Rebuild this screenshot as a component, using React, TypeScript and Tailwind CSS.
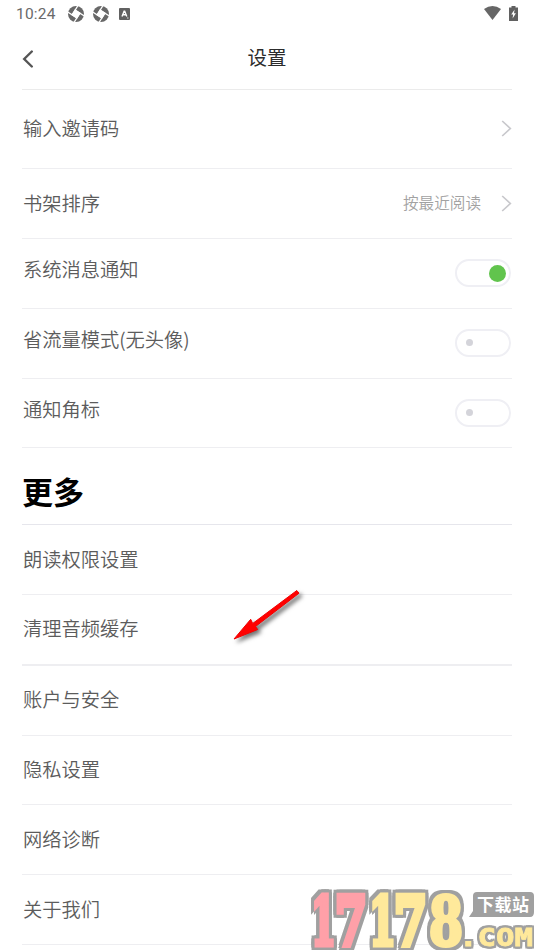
import { useState } from "react";
import clsx from "clsx";

function ShutterIcon() {
  return (
    <svg width="16" height="16" viewBox="0 0 16 16">
      <circle cx="8" cy="8" r="8" fill="#686868" />
      <g transform="rotate(32 8 8)" fill="#fff" stroke="#fff" strokeWidth="1.300">
        <rect x="5.200" y="5.200" width="5.600" height="5.600" />
        <path d="M5 5.200H16M10.800 5V16M11 10.800H0M5.200 11V0" />
      </g>
    </svg>
  );
}

function StatusBar() {
  return (
    <div className="h-7 flex items-center pl-4 pr-4">
      <span className="w-[52px] font-[Roboto] text-[15.5px] leading-7 tracking-[0.2px] text-[#6a6a6a]">10:24</span>
      <div className="flex items-center gap-[9px] -mt-px">
        <ShutterIcon />
        <ShutterIcon />
        <svg className="ml-px" width="11" height="12" viewBox="0 0 11 12">
          <rect width="11" height="12" rx="1" fill="#616161" />
          <path d="M3 8.500L5.100 3.200H5.700L7.800 8.500M3.800 6.800H7" fill="none" stroke="#fff" strokeWidth="1.400" />
          <path d="M8 10H9.500" stroke="#ddd" />
        </svg>
      </div>
      <div className="ml-auto flex items-center gap-2 -mt-0.5">
        <svg width="17" height="14" viewBox="0 0 17 14">
          <path d="M0 3Q8.500 -2.800 17 3L8.500 14Z" fill="#666" />
        </svg>
        <svg width="9" height="15" viewBox="0 0 9 15">
          <path d="M2.500 0H6.500V1.500H9V15H0V1.500H2.500Z" fill="#616161" />
          <path d="M5.600 3.500L2.200 8.500H4.100L3.600 12.500L6.900 7.300H5Z" fill="#fff" />
        </svg>
      </div>
    </div>
  );
}

function Chevron() {
  return (
    <svg className="mb-px" width="11" height="17" viewBox="0 0 11 17" fill="none" stroke="#c8c8cc" strokeWidth="1.700">
      <path d="M1.200 1L9.300 8.500L1.200 16" />
    </svg>
  );
}

function Toggle({ initial = false }: { initial?: boolean }) {
  const [on, setOn] = useState(initial);

  return (
    <button
      type="button"
      role="switch"
      aria-checked={on}
      onClick={() => setOn(!on)}
      className={clsx(
        "w-14 h-7 mb-px mr-px rounded-full border-2 border-[#efeff4] bg-white flex items-center",
        on ? "justify-end pr-[3px]" : "pl-[9px] pb-px"
      )}
    >
      <span className={clsx("rounded-full", on ? "size-[17px] bg-[#61c44d]" : "size-[7px] bg-[#d4d4da]")} />
    </button>
  );
}

interface RowProps {
  label: string;
  className?: string;
  labelClass?: string;
  children?: React.ReactNode;
}

function Row({ label, className = "h-[70px] border-b", labelClass = "pb-0.5", children }: RowProps) {
  return (
    <div className={clsx("flex items-center justify-between border-[#eeeef1]", className)}>
      <span className={clsx("text-[19.25px] leading-7 font-[350] text-[#5c5c5c] pl-px", labelClass)}>{label}</span>
      {children}
    </div>
  );
}

function Arrow() {
  return (
    <svg className="absolute left-[228px] top-[584px]" width="82" height="68" viewBox="0 0 82 68">
      <path
        d="M6 55L22.700 35.300L24.700 39.500L68.800 6.500L71 9.200L27.500 42.500L29.700 45.500Z"
        fill="#f00"
        stroke="#f00000"
        strokeLinejoin="round"
        className="drop-shadow-[3px_3px_2px_rgba(0,0,0,0.55)]"
      />
    </svg>
  );
}

function Watermark() {
  const digits = [
    { char: "1", x: 311, width: 25, stroke: 5, color: "#ffa0a8" },
    { char: "7", x: 335, width: 32, stroke: 6, color: "#ffa0a8" },
    { char: "1", x: 369, width: 27, stroke: 5, color: "#ffe99b" },
    { char: "7", x: 394, width: 33, stroke: 6, color: "#ffe99b" },
    { char: "8", x: 429, width: 34, stroke: 4, color: "#ffe99b" },
  ];

  return (
    <svg className="absolute right-0 bottom-0" width="226" height="64" viewBox="308 886 226 64">
      <g
        fontFamily="DejaVu Serif"
        fontWeight="700"
        className="[filter:drop-shadow(3px_0_0_#a0a0a0)_drop-shadow(-3px_0_0_#a0a0a0)_drop-shadow(0_3px_0_#a0a0a0)_drop-shadow(0_-3px_0_#a0a0a0)]"
      >
        {digits.map((d, i) => (
          <text
            key={i}
            x={d.x}
            y="945"
            fontSize="67"
            fill={d.color}
            stroke={d.color}
            strokeWidth={d.stroke}
            textLength={d.width}
            lengthAdjust="spacingAndGlyphs"
          >
            {d.char}
          </text>
        ))}
      </g>
      <text
        x="459"
        y="946"
        fontFamily="DejaVu Sans Mono"
        fontWeight="700"
        fontSize="25"
        fill="#ffe99b"
        stroke="#ffe99b"
        strokeWidth="0.800"
        textLength="74"
        lengthAdjust="spacingAndGlyphs"
        className="[filter:drop-shadow(2px_0_0_#a0a0a0)_drop-shadow(-2px_0_0_#a0a0a0)_drop-shadow(0_2px_0_#a0a0a0)_drop-shadow(0_-2px_0_#a0a0a0)]"
      >
        .COM
      </text>
      <path d="M476 892H530Q534 892 534 896V912Q534 917 530 917H469L473 911V896Q473 892 477 892Z" fill="#a0a0a0" />
      <text x="477" y="911" fontFamily="Noto Sans CJK SC" fontWeight="700" fontSize="17" fill="#fff" textLength="52">
        下载站
      </text>
    </svg>
  );
}

export default function App() {
  return (
    <div className="relative w-full h-[950px] overflow-hidden bg-white font-['Noto_Sans_CJK_SC',sans-serif]">
      <StatusBar />

      <div className="px-[22px]">
        {/* Header */}
        <div className="h-[62px] grid grid-cols-3 items-center border-b border-[#ebebeb]">
          <button type="button">
            <svg width="12" height="18" viewBox="0 0 12 18" fill="none" stroke="#555" strokeWidth="2.400" strokeLinecap="round">
              <path d="M9.800 1.500L2.200 9L9.800 16.500" />
            </svg>
          </button>
          <h1 className="pb-1 text-center text-[19.5px] leading-7 text-[#2c2c2c]">设置</h1>
        </div>

        <Row label="输入邀请码" className="h-[79px] border-b">
          <Chevron />
        </Row>
        <Row label="书架排序">
          <div className="flex items-center gap-5">
            <span className="pb-[3px] text-[15.6px] leading-6 font-[350] text-[#a2a2a2]">按最近阅读</span>
            <Chevron />
          </div>
        </Row>
        <Row label="系统消息通知" labelClass="pb-[9px]">
          <Toggle initial />
        </Row>
        <Row label="省流量模式(无头像)" labelClass="pb-[9px]">
          <Toggle />
        </Row>
        <Row label="通知角标" className="h-[69px] border-b" labelClass="pb-[9px]">
          <Toggle />
        </Row>

        {/* More */}
        <h2 className="h-[77px] flex items-center pt-2.5 border-b border-[#e6e6ec] text-[31px] font-bold leading-10 text-black">
          更多
        </h2>
        <Row label="朗读权限设置" />
        <Row label="清理音频缓存" className="h-[71px] border-b-2" labelClass="pb-[3px]" />
        <Row label="账户与安全" labelClass="pb-1" />
        <Row label="隐私设置" className="h-[69px] border-b" />
        <Row label="网络诊断" />
        <Row label="关于我们" />
      </div>

      <Arrow />
      <Watermark />
    </div>
  );
}
